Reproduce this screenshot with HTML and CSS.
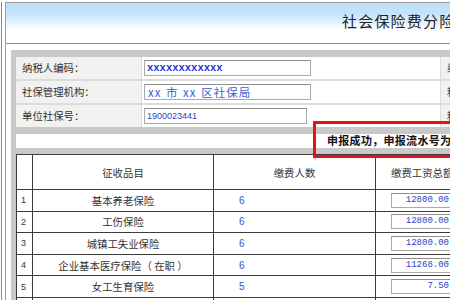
FILE: index.html
```html
<!DOCTYPE html>
<html lang="zh-CN">
<head>
<meta charset="utf-8">
<title>社会保险费分险种申报</title>
<link rel="stylesheet" href="styles.css">
</head>
<body>
<div class="frame">
  <div class="panel">
    <div class="header"><div class="title">社会保险费分险种申报表</div></div>
    <div class="content">
      <div class="box">
        <div class="form">
          <div class="lbl">纳税人编码：</div>
          <div class="val"><span class="inp code">xxxxxxxxxxxx</span></div>
          <div class="lbl">纳税人名称：</div>
          <div class="lbl">社保管理机构：</div>
          <div class="val"><span class="inp org">xx 市 xx 区社保局</span></div>
          <div class="lbl">税务机关：</div>
          <div class="lbl">单位社保号：</div>
          <div class="val"><span class="inp num short">1900023441</span></div>
          <div class="lbl">税款所属期：</div>
        </div>
        <div class="msg">申报成功，申报流水号为：10000000001</div>
        <table class="grid">
          <colgroup>
            <col class="c1"><col class="c2"><col class="c3"><col class="c4">
          </colgroup>
          <thead>
            <tr><th></th><th>征收品目</th><th>缴费人数</th><th>缴费工资总额</th></tr>
          </thead>
          <tbody>
            <tr><td class="no">1</td><td class="item">基本养老保险</td><td class="cnt">6</td><td><span class="amt">12800.00</span></td></tr>
            <tr><td class="no">2</td><td class="item">工伤保险</td><td class="cnt">6</td><td><span class="amt">12800.00</span></td></tr>
            <tr><td class="no">3</td><td class="item">城镇工失业保险</td><td class="cnt">6</td><td><span class="amt">12800.00</span></td></tr>
            <tr><td class="no">4</td><td class="item">企业基本医疗保险（ 在职 ）</td><td class="cnt">6</td><td><span class="amt">11268.00</span></td></tr>
            <tr><td class="no">5</td><td class="item">女工生育保险</td><td class="cnt">5</td><td><span class="amt">7.50</span></td></tr>
            <tr><td class="no">6</td><td class="item">大额医疗保险</td><td class="cnt">6</td><td><span class="amt">12800.00</span></td></tr>
          </tbody>
        </table>
      </div>
    </div>
  </div>
</div>
<div class="mark"></div>
</body>
</html>
```

FILE: styles.css
```css
html, body {
  margin: 0;
  padding: 0;
  width: 450px;
  height: 300px;
  overflow: hidden;
  background: #fff;
}
body {
  position: relative;
  font-family: "Noto Sans CJK SC", "Noto Sans", sans-serif;
  font-size: 10.4px;
  color: #333;
}
.frame {
  margin-left: 1px;
  border-left: 1px solid #8e8a82;
  padding-left: 3px;
  width: 1000px;
  height: 300px;
}
.panel {
  margin-top: 2px;
  border-top: 1px solid #9c9c9c;
  border-left: 1px solid #9c9c9c;
  height: 298px;
}
.header {
  height: 40px;
  border-bottom: 1px solid #8c8c8c;
  background: linear-gradient(#bde0fa 0, #c3e3fb 10px, #ffffff 27px);
}
.title {
  padding: 8px 0 0 336px;
  font-size: 15px;
  line-height: 20px;
  letter-spacing: 1.2px;
  color: #222;
  white-space: nowrap;
}
.content {
  padding: 6px 0 0 5px;
}
.box {
  background: #c9c9c9;
  padding: 7px 0 0 5px;
}
.form {
  display: grid;
  grid-template-columns: 125px 298px 125px;
  grid-auto-rows: 22px;
  column-gap: 1px;
  row-gap: 2px;
  background: #dcdcdc;
}
.lbl {
  background: #f1f1f1;
  padding-left: 6px;
  line-height: 22px;
  white-space: nowrap;
}
.val {
  background: #fff;
  display: flex;
  align-items: center;
  padding-left: 2px;
}
.inp {
  box-sizing: border-box;
  width: 167px;
  height: 16px;
  border: 1px solid #a9a9a9;
  border-top-color: #8f8f8f;
  padding-left: 2px;
  background: #fff;
  white-space: nowrap;
  display: flex;
  align-items: center;
}
.inp.short {
  width: 163px;
}
.code {
  font-family: "Liberation Mono", monospace;
  font-size: 10.5px;
  font-weight: bold;
  color: #1d35d8;
}
.org {
  font-size: 11.5px;
  letter-spacing: 1px;
  word-spacing: 1px;
  color: #3a5ed0;
  padding-left: 3px;
}
.num {
  font-family: "Liberation Sans", sans-serif;
  font-size: 9px;
  color: #2346c8;
}
.msg {
  margin-top: 7px;
  margin-bottom: 6px;
  height: 14px;
  background: #fff;
  padding-left: 311px;
  font-size: 11px;
  font-weight: bold;
  line-height: 12px;
  letter-spacing: 0.3px;
  color: #111;
  white-space: nowrap;
}
.grid {
  border-collapse: collapse;
  table-layout: fixed;
  width: 560px;
  background: #fff;
}
.c1 { width: 16px; }
.c2 { width: 181px; }
.c3 { width: 162px; }
.c4 { width: 201px; }
.grid th, .grid td {
  border: 1px solid #3c3c3c;
  padding: 0;
  white-space: nowrap;
}
.grid th {
  height: 34px;
  font-weight: normal;
  text-align: center;
}
.grid th:nth-child(4) {
  text-align: left;
  padding-left: 15px;
}
.grid td {
  height: 20.6px;
}
.no {
  font-family: "Liberation Sans", sans-serif;
  font-size: 9px;
  padding-left: 4px !important;
  color: #333;
}
.item {
  text-align: center;
}
.cnt {
  padding-left: 25px !important;
  font-family: "Liberation Sans", sans-serif;
  font-size: 10px;
  color: #3553c8;
}
.amt {
  display: block;
  box-sizing: border-box;
  margin-left: 15px;
  width: 66px;
  height: 15px;
  border: 1px solid #a9a9a9;
  border-top-color: #8c8c8c;
  text-align: right;
  padding-right: 7px;
  font-family: "Liberation Mono", monospace;
  font-size: 9px;
  line-height: 13px;
  color: #2546c6;
}
.mark {
  position: absolute;
  left: 313px;
  top: 121px;
  width: 160px;
  height: 31px;
  border: 3px solid #e2141a;
}
```
